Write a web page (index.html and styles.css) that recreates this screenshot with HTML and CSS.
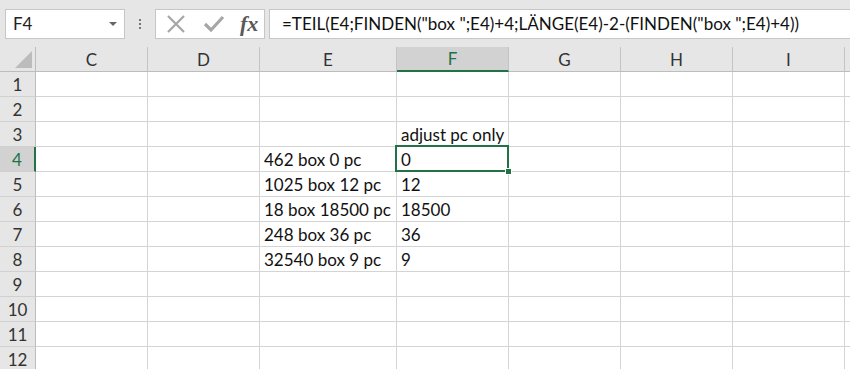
FILE: index.html
```html
<!DOCTYPE html>
<html lang="de">
<head>
    <meta charset="UTF-8">
    <title>Mappe1 - Excel</title>
    <link rel="stylesheet" href="styles.css">
</head>
<body>

    <!-- Formula bar -->
    <div class="xl-formula-bar">
        <div class="xl-name-box">
            <span class="xl-name-box-text">F4</span>
            <span class="xl-name-box-arrow"></span>
        </div>
        <div class="xl-grip">
            <span></span><span></span><span></span>
        </div>
        <div class="xl-fx-buttons">
            <svg class="xl-fx-icon" width="20" height="20" viewBox="0 0 20 20">
                <path d="M2 2 L18 18 M18 2 L2 18" stroke="#a6a6a6" stroke-width="2.2" fill="none"/>
            </svg>
            <svg class="xl-fx-icon" width="22" height="20" viewBox="0 0 22 20">
                <path d="M2 10 L8 16 L20 3" stroke="#a6a6a6" stroke-width="3.2" fill="none"/>
            </svg>
            <span class="xl-fx-label">fx</span>
        </div>
        <div class="xl-formula-input">=TEIL(E4;FINDEN("box ";E4)+4;LÄNGE(E4)-2-(FINDEN("box ";E4)+4))</div>
    </div>

    <!-- Sheet grid -->
    <div class="xl-sheet">
        <div class="xl-corner"><span class="xl-corner-tri"></span></div>
        <div class="xl-col-head">C</div>
        <div class="xl-col-head">D</div>
        <div class="xl-col-head">E</div>
        <div class="xl-col-head xl-active-head">F</div>
        <div class="xl-col-head">G</div>
        <div class="xl-col-head">H</div>
        <div class="xl-col-head">I</div>
        <div class="xl-col-head xl-col-tail"></div>
    </div>

    <script>
      // Cell contents, by row: [C, D, E, F]
      const cells = {
          3: ['', '', '', 'adjust pc only'],
          4: ['', '', '462 box 0 pc', '0'],
          5: ['', '', '1025 box 12 pc', '12'],
          6: ['', '', '18 box 18500 pc', '18500'],
          7: ['', '', '248 box 36 pc', '36'],
          8: ['', '', '32540 box 9 pc', '9']
      };

      const sheet = document.querySelector('.xl-sheet');

      for (let r = 1; r <= 12; r++) {
          const head = document.createElement('div');
          head.className = 'xl-row-head' + (r === 4 ? ' xl-active-row' : '');
          head.textContent = r;
          sheet.appendChild(head);

          const values = cells[r] || [];
          for (let c = 0; c < 8; c++) {
              const cell = document.createElement('div');
              cell.className = 'xl-cell';
              if (c === 7) cell.classList.add('xl-col-tail');
              if (r === 4 && c === 3) cell.classList.add('xl-selected');
              cell.textContent = values[c] || '';
              sheet.appendChild(cell);
          }
      }
    </script>
</body>
</html>
```

FILE: styles.css
```css
/* Page */
body {
    margin: 0;
    width: 850px;
    height: 369px;
    overflow: hidden;
    background-color: #ffffff;
    font-family: 'Lato', 'Open Sans', sans-serif;
}

/* Formula bar */
.xl-formula-bar {
    display: flex;
    align-items: center;
    height: 47px;
    padding: 0 0 0 5px;
    box-sizing: border-box;
    background-color: #e6e6e6;
}

.xl-name-box {
    display: flex;
    align-items: center;
    justify-content: space-between;
    width: 120px;
    height: 30px;
    box-sizing: border-box;
    padding: 0 7px 0 7px;
    background-color: #ffffff;
    border: 1px solid #c6c6c6;
}

.xl-name-box-text {
    font-size: 17px;
    color: #222;
}

.xl-name-box-arrow {
    width: 0;
    height: 0;
    border-left: 4px solid transparent;
    border-right: 4px solid transparent;
    border-top: 4px solid #666;
}

.xl-grip {
    display: flex;
    flex-direction: column;
    gap: 2px;
    width: 30px;
    align-items: center;
}

.xl-grip span {
    width: 2px;
    height: 2px;
    background-color: #777;
}

.xl-fx-buttons {
    display: flex;
    align-items: center;
    gap: 17px;
    width: 110px;
    height: 30px;
    box-sizing: border-box;
    padding-left: 10px;
    background-color: #ffffff;
    border: 1px solid #c6c6c6;
}

.xl-fx-icon {
    display: block;
}

.xl-fx-label {
    font-family: 'Liberation Serif', serif;
    font-style: italic;
    font-weight: bold;
    font-size: 22px;
    color: #595959;
    letter-spacing: 0;
    margin-left: -2px;
}

.xl-formula-input {
    flex: 1;
    height: 30px;
    margin-left: 4px;
    box-sizing: border-box;
    padding: 3px 0 0 12px;
    background-color: #ffffff;
    border: 1px solid #c6c6c6;
    border-right: none;
    font-size: 17px;
    color: #111;
    white-space: nowrap;
}

/* Sheet */
.xl-sheet {
    display: grid;
    grid-template-columns: 36px 112px 112px 137px 112px 112px 112px 112px 5px;
    grid-template-rows: 25px repeat(12, 25px);
    font-size: 17px;
    color: #111;
}

.xl-corner {
    position: relative;
    background-color: #e6e6e6;
    border-right: 1px solid #bdbdbd;
    border-bottom: 1px solid #bdbdbd;
}

.xl-corner-tri {
    position: absolute;
    right: 3px;
    bottom: 3px;
    width: 0;
    height: 0;
    border-left: 17px solid transparent;
    border-bottom: 17px solid #bcbcbc;
}

.xl-col-head {
    display: flex;
    align-items: center;
    justify-content: center;
    background-color: #e6e6e6;
    border-right: 1px solid #c4c4c4;
    border-bottom: 1px solid #bdbdbd;
    color: #333;
    font-size: 17px;
}

.xl-active-head {
    background-color: #d2d2d2;
    color: #217346;
    border-bottom: 2px solid #217346;
}

.xl-row-head {
    display: flex;
    align-items: flex-end;
    justify-content: center;
    padding-bottom: 1px;
    box-sizing: border-box;
    background-color: #e6e6e6;
    border-right: 1px solid #bdbdbd;
    border-bottom: 1px solid #d0d0d0;
    color: #333;
    font-size: 17px;
}

.xl-active-row {
    background-color: #d2d2d2;
    color: #217346;
    border-right: 2px solid #217346;
}

.xl-cell {
    display: flex;
    align-items: flex-end;
    box-sizing: border-box;
    padding: 0 0 1px 4px;
    border-right: 1px solid #d4d4d4;
    border-bottom: 1px solid #d4d4d4;
    white-space: nowrap;
}

.xl-col-tail {
    border-right: none;
}

/* Active cell */
.xl-selected {
    position: relative;
}

.xl-selected::after {
    content: '';
    position: absolute;
    left: -2px;
    top: -2px;
    right: -1px;
    bottom: -1px;
    border: 2px solid #217346;
}

.xl-selected::before {
    content: '';
    position: absolute;
    right: -4px;
    bottom: -4px;
    width: 5px;
    height: 5px;
    background-color: #217346;
    border: 1px solid #ffffff;
    z-index: 2;
}
```
